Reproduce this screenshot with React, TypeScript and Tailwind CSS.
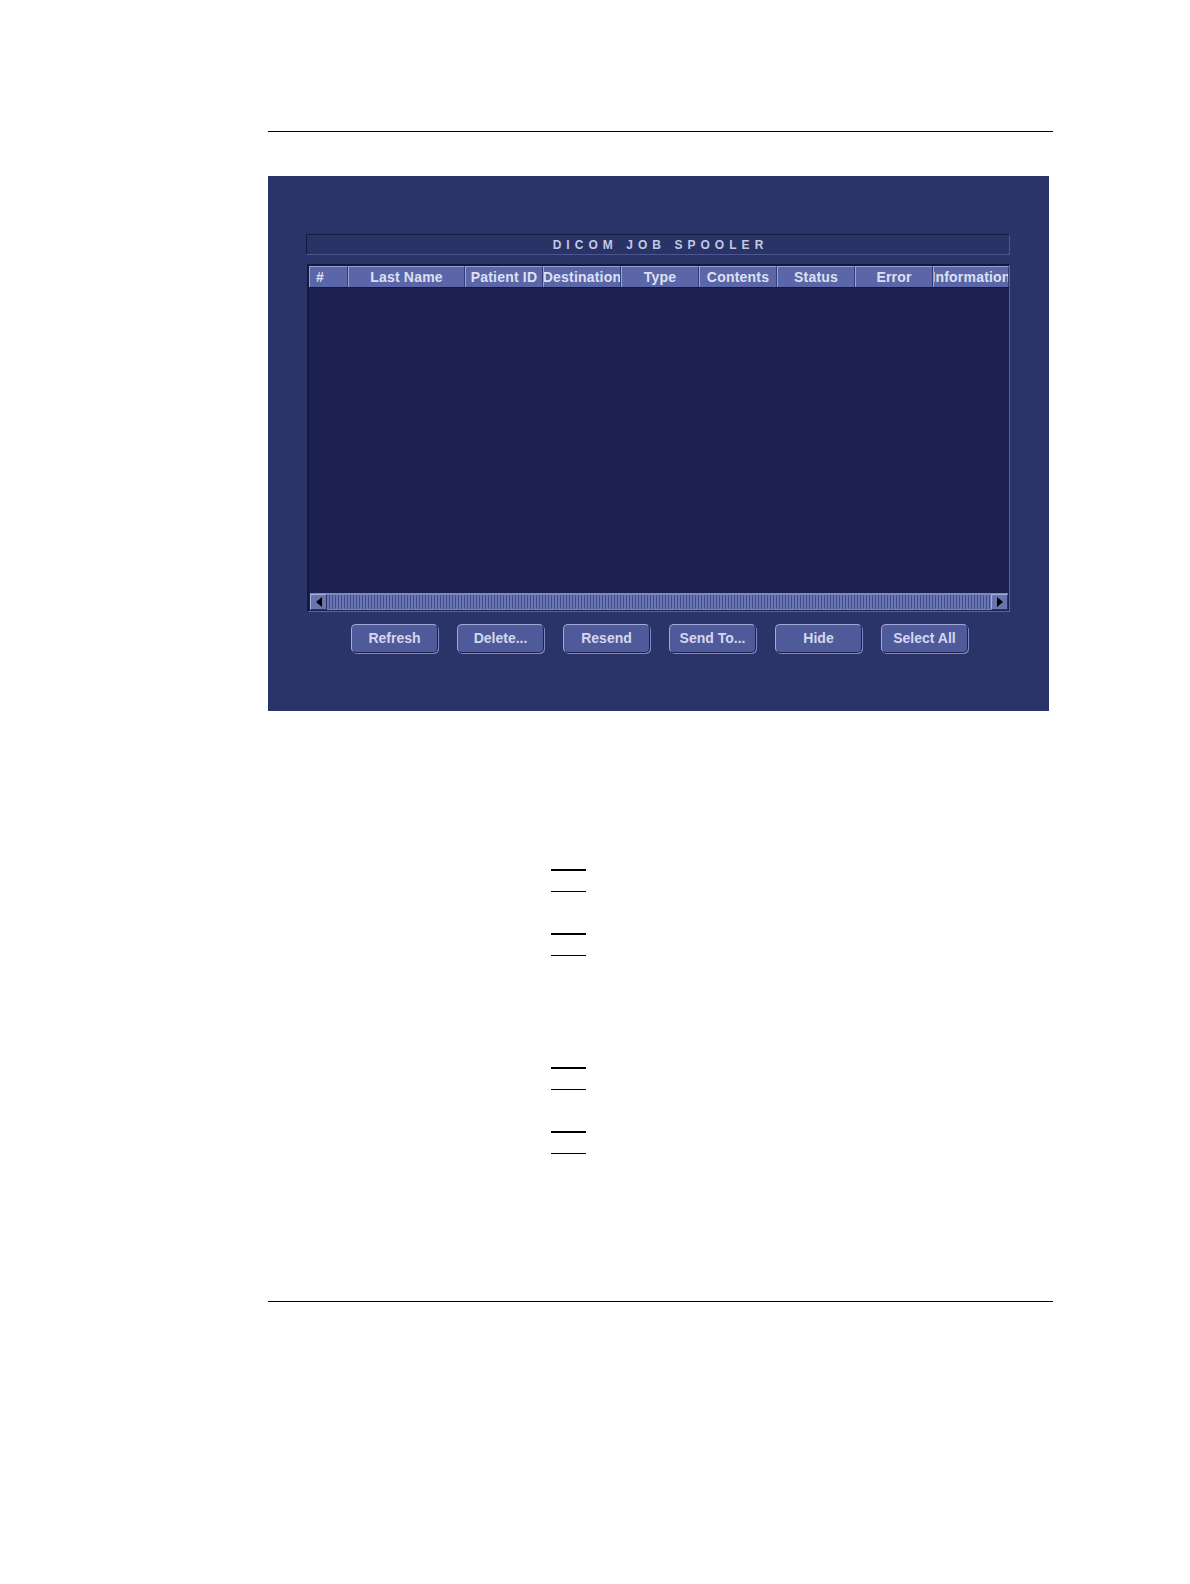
import React from 'react'

const COLUMNS: { label: string; width: string; align?: string }[] = [
  { label: '#', width: 'w-[39px]', align: 'justify-start pl-[6px]' },
  { label: 'Last Name', width: 'w-[117px]' },
  { label: 'Patient ID', width: 'w-[78px]' },
  { label: 'Destination', width: 'w-[78px]' },
  { label: 'Type', width: 'w-[78px]' },
  { label: 'Contents', width: 'w-[78px]' },
  { label: 'Status', width: 'w-[78px]' },
  { label: 'Error', width: 'w-[78px]' },
  { label: 'Information', width: 'w-[76px]' },
]

const BUTTONS = ['Refresh', 'Delete...', 'Resend', 'Send To...', 'Hide', 'Select All']

function Rules({ top }: { top: string }) {
  // pairs of short answer lines, thick over thin
  return (
    <div className={`flex flex-col ${top}`}>
      <div className="ml-[283px] w-[35px] h-[2px] bg-black" />
      <div className="ml-[283px] w-[35px] h-px bg-black mt-[20px]" />
      <div className="ml-[283px] w-[35px] h-[2px] bg-black mt-[41px]" />
      <div className="ml-[283px] w-[35px] h-px bg-black mt-[20px]" />
    </div>
  )
}

export default function App() {
  return (
    <div className="min-h-screen w-full bg-white pl-[268px] pt-[131px] pb-[100px] font-['Liberation_Sans',Arial,sans-serif]">
      <div className="w-[785px] h-px bg-black" />

      {/* Spooler screen */}
      <div className="mt-[44px] w-[781px] h-[535px] bg-[#2b3468] flex flex-col pl-[38px] pt-[58px]">
        <div className="w-[704px] h-[21px] bg-[#2a3366] border-t border-l border-[#171c45] border-b border-r border-b-[#4c5690] border-r-[#4c5690] flex items-center justify-center">
          <span className="text-[12px] font-bold tracking-[0.42em] text-[#c3c8e6] pl-[0.42em]">DICOM JOB SPOOLER</span>
        </div>

        <div className="mt-[9px] ml-px w-[703px] h-[348px] bg-[#1c2152] border-t-2 border-l-2 border-[#141840] border-b border-r border-b-[#5a64a0] border-r-[#5a64a0] flex flex-col">
          <div className="flex h-[22px] border-b border-[#141840]">
            {COLUMNS.map((c) => (
              <div
                key={c.label}
                className={`${c.width} shrink-0 h-full overflow-hidden flex items-center ${c.align ?? 'justify-center'} bg-[#5a66a8] border-t border-l border-[#9aa3d6] border-r border-r-[#333c78] text-[14px] tracking-[0.2px] font-bold text-[#dde0f2] whitespace-nowrap`}
              >
                {c.label}
              </div>
            ))}
          </div>
          <div className="flex-1" />
          <div className="h-[17px] mx-px mb-[1px] flex bg-[#3c4680] border-t border-[#7d87c0]">
            <div className="w-[17px] h-full bg-[#6a75b0] border-t border-l border-[#a4acdb] border-r border-b border-r-[#2a3268] border-b-[#2a3268] flex items-center justify-center">
              <div className="w-0 h-0 border-y-[5px] border-y-transparent border-r-[6px] border-r-black" />
            </div>
            <div className="flex-1 h-full bg-[repeating-linear-gradient(90deg,#6a76b2_0px,#6a76b2_2px,#434d8a_2px,#434d8a_3px)] border-y border-[#7c86bf]" />
            <div className="w-[17px] h-full bg-[#6a75b0] border-t border-l border-[#a4acdb] border-r border-b border-r-[#2a3268] border-b-[#2a3268] flex items-center justify-center">
              <div className="w-0 h-0 border-y-[5px] border-y-transparent border-l-[6px] border-l-black" />
            </div>
          </div>
        </div>

        <div className="mt-[12px] ml-[45px] flex gap-[19px]">
          {BUTTONS.map((b) => (
            <button
              key={b}
              className="w-[87px] h-[29px] rounded-[5px] bg-[#4f5a9a] border border-t-[#a1a9da] border-l-[#a1a9da] border-r-[#1c2150] border-b-[#1c2150] shadow-[1px_1px_0_#7f89c4] text-[14px] font-bold text-[#d4d8ee] flex items-center justify-center"
            >
              {b}
            </button>
          ))}
        </div>
      </div>

      <Rules top="mt-[158px]" />
      <Rules top="mt-[111px]" />

      <div className="mt-[147px] w-[785px] h-px bg-black" />
    </div>
  )
}
